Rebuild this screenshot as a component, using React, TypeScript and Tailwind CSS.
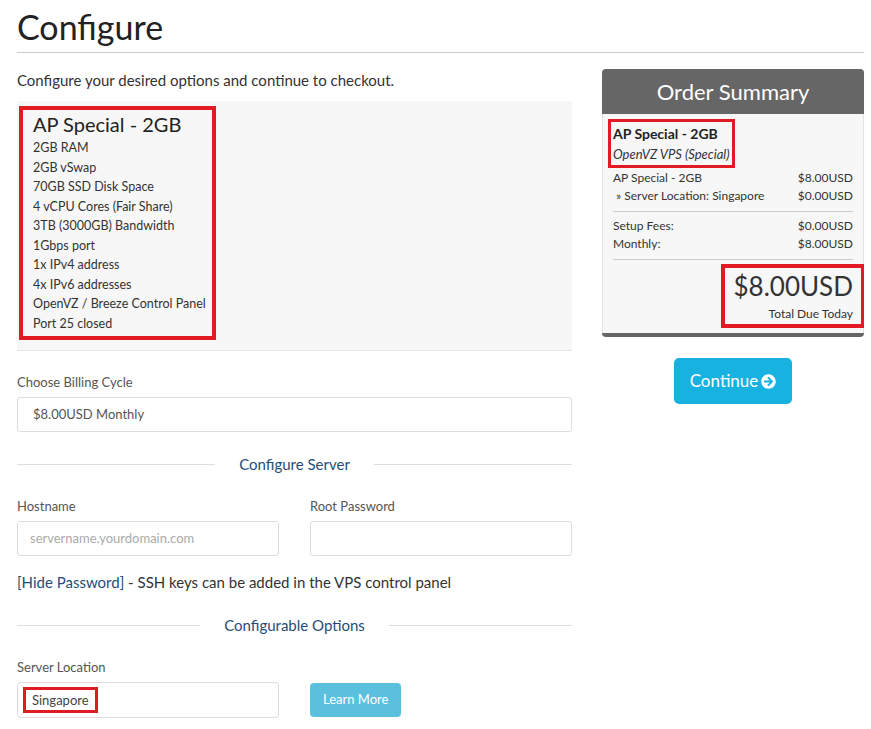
import { FaArrowCircleRight } from "react-icons/fa";

const specs = [
  "2GB RAM",
  "2GB vSwap",
  "70GB SSD Disk Space",
  "4 vCPU Cores (Fair Share)",
  "3TB (3000GB) Bandwidth",
  "1Gbps port",
  "1x IPv4 address",
  "4x IPv6 addresses",
  "OpenVZ / Breeze Control Panel",
  "Port 25 closed",
];

function Divider({ label }: { label: string }) {
  return (
    <div className="flex items-center gap-4 h-[30px]">
      <div className="flex-1 border-t border-[#ddd]" />
      <span className="text-[15px] text-[#1f4e79] px-2">{label}</span>
      <div className="flex-1 border-t border-[#ddd]" />
    </div>
  );
}

export default function App() {
  return (
    <div className="w-[871px] h-[729px] overflow-hidden bg-white text-[#333] font-['Lato',sans-serif]">
      <div className="pl-[17px] pr-[7px]">
        <h1 className="text-[34px] leading-[50px] pt-[2px] text-[#222] border-b border-[#ccc]">Configure</h1>
        <div className="flex gap-[30px]">
          {/* main column */}
          <div className="w-[555px]">
            <p className="text-[15px] mt-[17px] leading-[20px]">Configure your desired options and continue to checkout.</p>
            <div className="mt-[11px] bg-[#f7f7f7] border-b border-[#e5e5e5] h-[250px] pt-[5px] pl-[2px]">
              <div className="w-[197px] border-4 border-[#e01b24] px-[10px] pt-[1px] pb-[3px] whitespace-nowrap">
                <div className="text-[20px] leading-[27px] text-[#222]">AP Special - 2GB</div>
                {specs.map((s) => (
                  <div key={s} className="text-[12.5px] leading-[19.5px]">{s}</div>
                ))}
              </div>
            </div>

            <div className="mt-[23px] text-[13px] text-[#555] leading-[16px]">Choose Billing Cycle</div>
            <div className="mt-[7px] h-[35px] border border-[#ddd] rounded-[3px] flex items-center pl-[15px] text-[13px] text-[#555]">
              $8.00USD Monthly
            </div>

            <div className="mt-[17px]">
              <Divider label="Configure Server" />
            </div>

            <div className="mt-[19px] flex gap-[31px]">
              <div className="flex-1">
                <div className="text-[13px] text-[#555] leading-[16px]">Hostname</div>
                <div className="mt-[7px] h-[35px] border border-[#ddd] rounded-[3px] flex items-center pl-[12px] text-[13px] text-[#aaa]">
                  servername.yourdomain.com
                </div>
              </div>
              <div className="flex-1">
                <div className="text-[13px] text-[#555] leading-[16px]">Root Password</div>
                <div className="mt-[7px] h-[35px] border border-[#ddd] rounded-[3px]" />
              </div>
            </div>

            <p className="mt-[16px] text-[15px] leading-[20px]">
              <span className="text-[#1f4e79]">[Hide Password]</span> - SSH keys can be added in the VPS control panel
            </p>

            <div className="mt-[18px]">
              <Divider label="Configurable Options" />
            </div>

            <div className="mt-[19px] text-[13px] text-[#555] leading-[16px]">Server Location</div>
            <div className="mt-[7px] flex gap-[31px] items-center">
              <div className="w-[262px] h-[36px] border border-[#ddd] rounded-[3px] flex items-center pl-[5px]">
                <span className="border-[3px] border-[#e01b24] px-[6px] text-[13px] text-[#444] leading-[20px]">Singapore</span>
              </div>
              <button className="h-[34px] px-[13px] rounded-[4px] bg-[#5bc0de] text-white text-[13px]">Learn More</button>
            </div>
          </div>

          {/* order summary */}
          <div className="w-[262px] pt-[16px]">
            <div className="rounded-[4px] overflow-hidden border-b-4 border-[#666] bg-[#f7f7f7]">
              <div className="bg-[#666] h-[45px] flex items-center justify-center text-white text-[22px]">Order Summary</div>
              <div className="border-x border-[#e2e2e2] px-[10px] pb-[5px]">
                <div className="mt-[5px] -ml-[5px] inline-block border-[3px] border-[#e01b24] px-[2px] pt-[2px] pb-[1px]">
                  <div className="text-[14px] font-bold text-[#222] leading-[20px]">AP Special - 2GB</div>
                  <div className="text-[13px] italic leading-[20px]">OpenVZ VPS (Special)</div>
                </div>
                <div className="mt-[1px] text-[12px] leading-[18px]">
                  <div className="flex justify-between"><span>AP Special - 2GB</span><span>$8.00USD</span></div>
                  <div className="flex justify-between"><span>&nbsp;» Server Location: Singapore</span><span>$0.00USD</span></div>
                </div>
                <div className="border-t border-[#ccc] mt-[6px] pt-[5px] text-[12px] leading-[18px]">
                  <div className="flex justify-between"><span>Setup Fees:</span><span>$0.00USD</span></div>
                  <div className="flex justify-between"><span>Monthly:</span><span>$8.00USD</span></div>
                </div>
                <div className="border-t border-[#ccc] mt-[6px] flex justify-end">
                  <div className="mt-[4px] -mr-[12px] w-[144px] border-4 border-[#e01b24] pr-[8px] text-right">
                    <div className="text-[26px] leading-[36px] text-[#333]">$8.00USD</div>
                    <div className="text-[12px] leading-[20px]">Total Due Today</div>
                  </div>
                </div>
              </div>
            </div>
            <div className="mt-[21px] flex justify-center">
              <button className="h-[46px] px-[16px] rounded-[5px] bg-[#17b2e0] text-white text-[17px] flex items-center gap-[3px]">
                Continue <FaArrowCircleRight className="w-[15px] h-[15px]" />
              </button>
            </div>
          </div>
        </div>
      </div>
    </div>
  );
}
